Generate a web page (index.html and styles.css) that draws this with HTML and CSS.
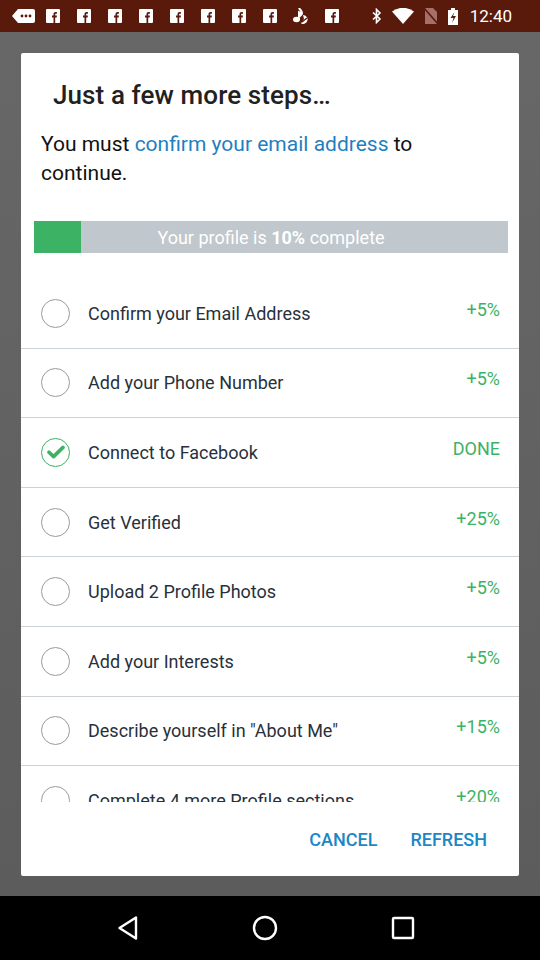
FILE: index.html
```html
<!DOCTYPE html>
<html>
<head>
<meta charset="utf-8">
<link rel="stylesheet" href="styles.css">
</head>
<body>
<div class="screen">
  <div class="statusbar">
    <div class="notifs">
      <svg class="msg" width="23" height="14" viewBox="0 0 23 14"><path d="M6 0H21a2 2 0 0 1 2 2V12a2 2 0 0 1-2 2H6L0 7Z" fill="#fff"/><circle cx="10" cy="7" r="1.4" fill="#5a1a0b"/><circle cx="14" cy="7" r="1.4" fill="#5a1a0b"/><circle cx="18" cy="7" r="1.4" fill="#5a1a0b"/></svg>
      <svg class="fb" width="14" height="14" viewBox="0 0 14 14"><rect width="14" height="14" rx="1" fill="#fff"/><path d="M7.5 14V8.5H6V6.6h1.5V5.2C7.5 3.8 8.3 3 9.6 3c.6 0 1.1.05 1.3.1v1.6h-.9c-.7 0-.8.3-.8.8v1.1h1.7l-.2 1.9H9.2V14Z" fill="#5a1a0b"/></svg>
      <svg class="fb" width="14" height="14" viewBox="0 0 14 14"><rect width="14" height="14" rx="1" fill="#fff"/><path d="M7.5 14V8.5H6V6.6h1.5V5.2C7.5 3.8 8.3 3 9.6 3c.6 0 1.1.05 1.3.1v1.6h-.9c-.7 0-.8.3-.8.8v1.1h1.7l-.2 1.9H9.2V14Z" fill="#5a1a0b"/></svg>
      <svg class="fb" width="14" height="14" viewBox="0 0 14 14"><rect width="14" height="14" rx="1" fill="#fff"/><path d="M7.5 14V8.5H6V6.6h1.5V5.2C7.5 3.8 8.3 3 9.6 3c.6 0 1.1.05 1.3.1v1.6h-.9c-.7 0-.8.3-.8.8v1.1h1.7l-.2 1.9H9.2V14Z" fill="#5a1a0b"/></svg>
      <svg class="fb" width="14" height="14" viewBox="0 0 14 14"><rect width="14" height="14" rx="1" fill="#fff"/><path d="M7.5 14V8.5H6V6.6h1.5V5.2C7.5 3.8 8.3 3 9.6 3c.6 0 1.1.05 1.3.1v1.6h-.9c-.7 0-.8.3-.8.8v1.1h1.7l-.2 1.9H9.2V14Z" fill="#5a1a0b"/></svg>
      <svg class="fb" width="14" height="14" viewBox="0 0 14 14"><rect width="14" height="14" rx="1" fill="#fff"/><path d="M7.5 14V8.5H6V6.6h1.5V5.2C7.5 3.8 8.3 3 9.6 3c.6 0 1.1.05 1.3.1v1.6h-.9c-.7 0-.8.3-.8.8v1.1h1.7l-.2 1.9H9.2V14Z" fill="#5a1a0b"/></svg>
      <svg class="fb" width="14" height="14" viewBox="0 0 14 14"><rect width="14" height="14" rx="1" fill="#fff"/><path d="M7.5 14V8.5H6V6.6h1.5V5.2C7.5 3.8 8.3 3 9.6 3c.6 0 1.1.05 1.3.1v1.6h-.9c-.7 0-.8.3-.8.8v1.1h1.7l-.2 1.9H9.2V14Z" fill="#5a1a0b"/></svg>
      <svg class="fb" width="14" height="14" viewBox="0 0 14 14"><rect width="14" height="14" rx="1" fill="#fff"/><path d="M7.5 14V8.5H6V6.6h1.5V5.2C7.5 3.8 8.3 3 9.6 3c.6 0 1.1.05 1.3.1v1.6h-.9c-.7 0-.8.3-.8.8v1.1h1.7l-.2 1.9H9.2V14Z" fill="#5a1a0b"/></svg>
      <svg class="fb" width="14" height="14" viewBox="0 0 14 14"><rect width="14" height="14" rx="1" fill="#fff"/><path d="M7.5 14V8.5H6V6.6h1.5V5.2C7.5 3.8 8.3 3 9.6 3c.6 0 1.1.05 1.3.1v1.6h-.9c-.7 0-.8.3-.8.8v1.1h1.7l-.2 1.9H9.2V14Z" fill="#5a1a0b"/></svg>
      <svg class="note" width="18" height="16" viewBox="0 0 18 16"><path d="M7 0c1 2 3 3 3 5 0 1-.6 1.6-1 2 .3-1.4-.6-2.4-2-2.8V11" stroke="#fff" stroke-width="2" fill="none"/><ellipse cx="4.5" cy="11.5" rx="3.5" ry="2.8" fill="#fff"/><path d="M11 7a4.5 4.5 0 1 1-2 8.5l3-4.5Z" fill="#fff"/><path d="M10 14l5-4" stroke="#5a1a0b" stroke-width="1.4"/></svg>
      <svg class="fb" width="14" height="14" viewBox="0 0 14 14"><rect width="14" height="14" rx="1" fill="#fff"/><path d="M7.5 14V8.5H6V6.6h1.5V5.2C7.5 3.8 8.3 3 9.6 3c.6 0 1.1.05 1.3.1v1.6h-.9c-.7 0-.8.3-.8.8v1.1h1.7l-.2 1.9H9.2V14Z" fill="#5a1a0b"/></svg>
    </div>
    <div class="sys">
      <svg width="10" height="16" viewBox="0 0 10 16"><path d="M1 4.5l7 6.5-3.5 3.5V1.5L8 5 1 11.5" stroke="#fff" stroke-width="1.6" fill="none"/></svg>
      <svg width="22" height="16" viewBox="0 0 22 16"><path d="M0 3.5Q11-4 22 3.5L11 16Z" fill="#fff"/></svg>
      <svg width="14" height="16" viewBox="0 0 14 16"><path d="M1 0h8l4 4v12H1Z" fill="#a86f66"/><path d="M0 0l14 16" stroke="#5a1a0b" stroke-width="1.6"/></svg>
      <svg width="10" height="17" viewBox="0 0 10 17"><rect x="3" y="0" width="4" height="2" fill="#fff"/><rect x="0" y="2" width="10" height="15" fill="#fff"/><path d="M6.5 4L2.5 10h3l-1.5 5 4-7H5Z" fill="#5a1a0b"/></svg>
      <span class="time">12:40</span>
    </div>
  </div>

  <div class="backdrop">
    <div class="dialog">
      <h1 class="title">Just a few more steps…</h1>
      <p class="msgtext">You must <span class="link">confirm your email address</span> to continue.</p>
      <div class="progress">
        <div class="fill" style="width:10%"></div>
        <div class="ptext">Your profile is&nbsp;<b>10%</b>&nbsp;complete</div>
      </div>
      <div class="list">
        <div class="row"><span class="radio"></span><span class="label">Confirm your Email Address</span><span class="pct">+5%</span></div>
        <div class="row"><span class="radio"></span><span class="label">Add your Phone Number</span><span class="pct">+5%</span></div>
        <div class="row"><span class="radio done"><svg width="18" height="14" viewBox="0 0 18 14"><path d="M2 7.2l4.6 4.4L16 2.4" stroke="#3cb264" stroke-width="3.6" fill="none" stroke-linecap="round" stroke-linejoin="round"/></svg></span><span class="label">Connect to Facebook</span><span class="pct">DONE</span></div>
        <div class="row"><span class="radio"></span><span class="label">Get Verified</span><span class="pct">+25%</span></div>
        <div class="row"><span class="radio"></span><span class="label">Upload 2 Profile Photos</span><span class="pct">+5%</span></div>
        <div class="row"><span class="radio"></span><span class="label">Add your Interests</span><span class="pct">+5%</span></div>
        <div class="row"><span class="radio"></span><span class="label">Describe yourself in "About Me"</span><span class="pct">+15%</span></div>
        <div class="row"><span class="radio"></span><span class="label">Complete 4 more Profile sections</span><span class="pct">+20%</span></div>
      </div>
      <div class="actions">
        <span class="btn">CANCEL</span>
        <span class="btn">REFRESH</span>
      </div>
    </div>
  </div>

  <div class="navbar">
    <svg width="22" height="26" viewBox="0 0 22 26"><path d="M19 2.5V23.5L2.5 13Z" stroke="#fff" stroke-width="2.4" fill="none" stroke-linejoin="round"/></svg>
    <svg width="26" height="26" viewBox="0 0 26 26"><circle cx="13" cy="13" r="11" stroke="#fff" stroke-width="2.4" fill="none"/></svg>
    <svg width="24" height="24" viewBox="0 0 24 24"><rect x="2" y="2" width="20" height="20" rx="1" stroke="#fff" stroke-width="2.4" fill="none"/></svg>
  </div>
</div>
</body>
</html>
```

FILE: styles.css
```css
* { box-sizing: border-box; }
html, body { margin: 0; padding: 0; }
body { font-family: Roboto, "Noto Sans", sans-serif; background: #000; }
.screen { width: 540px; height: 960px; display: flex; flex-direction: column; overflow: hidden; }

.statusbar { height: 32px; background: #5a1a0b; display: flex; align-items: center; justify-content: space-between; padding: 0 28px 0 12px; flex-shrink: 0; }
.notifs { display: flex; align-items: center; gap: 17px; }
.notifs .msg { margin-right: -6px; }
.notifs .note { margin: 0 -2px; }
.sys { display: flex; align-items: center; gap: 10px; }
.time { color: #fff; font-size: 17px; margin-left: 2px; }

.backdrop { flex: 1; background: linear-gradient(#676767, #5c5c5c); padding: 21px 21px 0; }
.dialog { background: #fff; height: 823px; border-radius: 2px; display: flex; flex-direction: column; overflow: hidden; }

.title { margin: 0; padding: 27px 0 0 32px; font-size: 26px; font-weight: 500; color: #212121; line-height: 30px; letter-spacing: 0.1px; }
.msgtext { margin: 20px 0 0; padding: 0 60px 0 20px; font-size: 21px; line-height: 29px; color: #111; }
.link { color: #1f7fbf; }

.progress { margin: 33px 11px 0 13px; height: 32px; background: #c0c7cd; position: relative; flex-shrink: 0; }
.fill { height: 100%; background: #3cb264; }
.ptext { position: absolute; inset: 0; display: flex; align-items: center; justify-content: center; color: #fff; font-size: 18px; }
.ptext b { font-weight: 700; }

.list { margin-top: 26px; height: 523px; overflow: hidden; flex-shrink: 0; }
.row { height: 69.6px; border-bottom: 1px solid #cdd2d6; display: flex; align-items: center; padding: 0 19px 0 20px; }
.radio { width: 29px; height: 29px; border-radius: 50%; border: 1.5px solid #9a9a9a; flex-shrink: 0; display: flex; align-items: center; justify-content: center; }
.radio.done { border-color: #3cb264; }
.label { margin-left: 18px; font-size: 18px; color: #28313b; flex: 1; }
.pct { font-size: 18px; color: #3cb264; margin-top: -8px; }

.actions { display: flex; justify-content: flex-end; gap: 33px; padding: 27px 32px 0 0; }
.btn { color: #1a87c8; font-size: 18px; font-weight: 500; }

.navbar { height: 64px; background: #000; display: flex; align-items: center; justify-content: center; gap: 113px; flex-shrink: 0; padding-right: 8px; }
```
